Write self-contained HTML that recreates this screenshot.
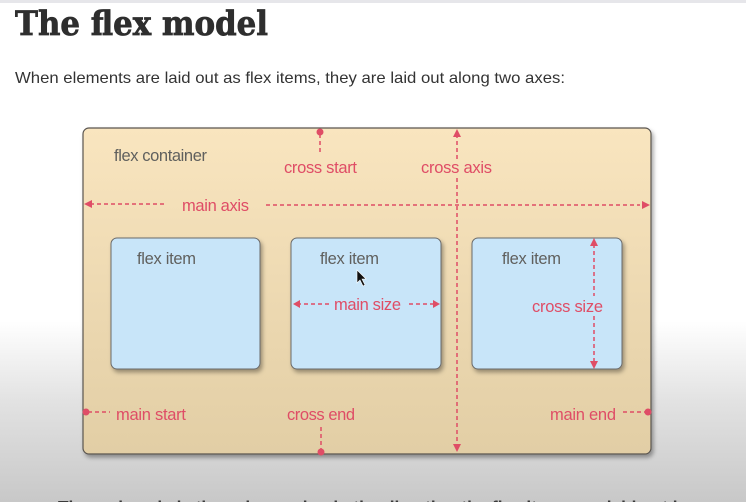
<!DOCTYPE html>
<html><head><meta charset="utf-8"><style>
html,body{margin:0;padding:0;width:746px;height:502px;overflow:hidden;background:#fff}
</style></head><body>
<svg width="746" height="502" viewBox="0 0 746 502" xmlns="http://www.w3.org/2000/svg" font-family="Liberation Sans, sans-serif">
<defs>
<linearGradient id="bg" x1="0" y1="0" x2="0" y2="1">
<stop offset="0" stop-color="#ffffff"/><stop offset="0.64" stop-color="#ffffff"/><stop offset="0.8" stop-color="#e2e2e2"/><stop offset="1" stop-color="#c8c8c8"/>
</linearGradient>
<linearGradient id="ct" x1="0" y1="0" x2="0" y2="1">
<stop offset="0" stop-color="#f9e5bf"/><stop offset="1" stop-color="#e2cea5"/>
</linearGradient>
<filter id="sh" x="-10%" y="-10%" width="130%" height="130%"><feDropShadow dx="2" dy="3" stdDeviation="2" flood-color="#000" flood-opacity="0.35"/></filter>
</defs>
<rect width="746" height="502" fill="url(#bg)"/>
<rect x="0" y="0" width="746" height="3" fill="#e6e6ea"/>
<text x="15" y="35" font-family="DejaVu Serif, Liberation Serif, serif" font-weight="bold" font-size="34" fill="#2e2e2e" stroke="#2e2e2e" stroke-width="0.8" textLength="253" lengthAdjust="spacingAndGlyphs">The flex model</text>
<text x="15" y="83" font-size="16" fill="#333" textLength="550" lengthAdjust="spacingAndGlyphs">When elements are laid out as flex items, they are laid out along two axes:</text>

<rect x="83" y="128" width="568" height="326" rx="6" fill="url(#ct)" stroke="#5a5550" stroke-width="1.2" filter="url(#sh)"/>
<g fill="#c8e5f9" stroke="#6a6a6a" stroke-width="1" filter="url(#sh)">
<rect x="111" y="238" width="149" height="131" rx="6"/>
<rect x="291" y="238" width="150" height="131" rx="6"/>
<rect x="472" y="238" width="150" height="131" rx="6"/>
</g>
<g fill="#60605e" font-size="16.5" lengthAdjust="spacingAndGlyphs">
<text x="114" y="161" textLength="93">flex container</text>
<text x="137" y="264" textLength="59">flex item</text>
<text x="320" y="264" textLength="59">flex item</text>
<text x="502" y="264" textLength="59">flex item</text>
</g>
<g fill="#df4d66" font-size="16.5" lengthAdjust="spacingAndGlyphs">
<text x="284" y="173" textLength="73">cross start</text>
<text x="421" y="173" textLength="71">cross axis</text>
<text x="182" y="211" textLength="67">main axis</text>
<text x="334" y="310" textLength="67">main size</text>
<text x="532" y="312" textLength="71">cross size</text>
<text x="116" y="420" textLength="70">main start</text>
<text x="287" y="420" textLength="68">cross end</text>
<text x="550" y="420" textLength="66">main end</text>
</g>
<g stroke="#df4d66" stroke-width="1.5" stroke-dasharray="4,3" fill="none">
<line x1="90" y1="204" x2="165" y2="204"/>
<line x1="266" y1="205" x2="640" y2="205"/>
<line x1="320" y1="134" x2="320" y2="155"/>
<line x1="457" y1="134" x2="457" y2="160"/>
<line x1="457" y1="178" x2="457" y2="446"/>
<line x1="297" y1="304" x2="330" y2="304"/>
<line x1="409" y1="304" x2="436" y2="304"/>
<line x1="594" y1="244" x2="594" y2="296"/>
<line x1="594" y1="316" x2="594" y2="364"/>
<line x1="88" y1="412" x2="110" y2="412"/>
<line x1="623" y1="412" x2="646" y2="412"/>
<line x1="321" y1="427" x2="321" y2="450"/>
</g>
<g fill="#df4d66">
<polygon points="84,204 92,200 92,208"/>
<polygon points="650,205 642,201 642,209"/>
<polygon points="457,129 453,137 461,137"/>
<polygon points="457,452 453,444 461,444"/>
<polygon points="293,304 300,300 300,308"/>
<polygon points="440,304 433,300 433,308"/>
<polygon points="594,238 590,246 598,246"/>
<polygon points="594,369 590,361 598,361"/>
<circle cx="320" cy="132" r="3.5"/>
<circle cx="86" cy="412" r="3.5"/>
<circle cx="648" cy="412" r="3.5"/>
<circle cx="321" cy="452" r="3.5"/>
</g>
<path d="M357 270 L357 283 L360 280 L363 286 L365 285 L362 279 L366 279 Z" fill="#111" stroke="#fff" stroke-width="0.6"/>
<text x="58" y="512" font-size="16" font-weight="bold" fill="#222" opacity="0.85" textLength="630" lengthAdjust="spacingAndGlyphs">The main axis is the axis running in the direction the flex items are laid out in</text>
</svg>
</body></html>
